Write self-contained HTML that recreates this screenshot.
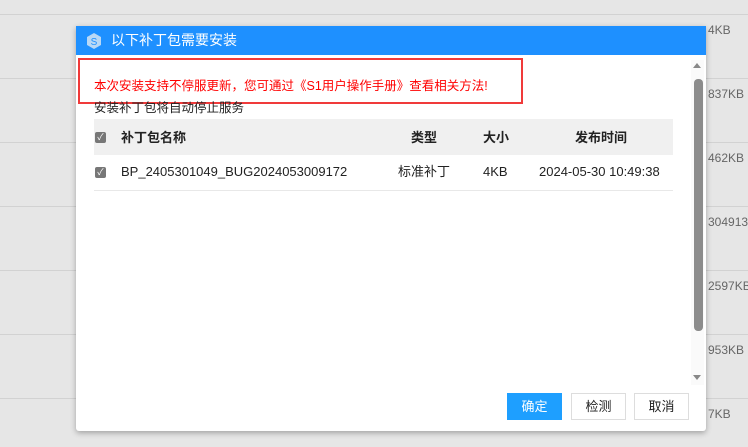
<!DOCTYPE html>
<html><head><meta charset="utf-8"><style>
*{margin:0;padding:0;box-sizing:border-box}
body{width:748px;height:447px;background:#e6e6e6;position:relative;overflow:hidden;font-family:"Liberation Sans","Noto Sans CJK SC",sans-serif;font-size:12px;color:#222}
.l{position:absolute;left:0;width:748px;height:1px;background:#d2d2d2}
.s{position:absolute;left:708px;color:#666;font-size:12px}
.dlg{position:absolute;left:76px;top:26px;width:630px;height:405px;background:#fff;box-shadow:0 2px 6px rgba(0,0,0,.3);border-radius:0 0 3px 3px}
.hd{height:29px;background:#1e90ff;color:#fff;font-size:14px;line-height:29px;padding-left:35px;position:relative}
.ab{position:absolute;line-height:16px}
.cb{position:absolute;width:11px;height:11px;background:#777;border-radius:2px;color:#fff;font-size:9px;line-height:11px;text-align:center}
.btn{position:absolute;top:367px;height:27px;width:55px;border:1px solid #ddd;text-align:center;line-height:25px;font-size:13px;background:#fff}
</style></head><body>
<div class="l" style="top:14px"></div><div class="l" style="top:78px"></div><div class="l" style="top:142px"></div><div class="l" style="top:206px"></div><div class="l" style="top:270px"></div><div class="l" style="top:334px"></div><div class="l" style="top:398px"></div>
<div class="s" style="top:23px">4KB</div><div class="s" style="top:87px">837KB</div><div class="s" style="top:151px">462KB</div><div class="s" style="top:215px">304913K</div><div class="s" style="top:279px">2597KB</div><div class="s" style="top:343px">953KB</div><div class="s" style="top:407px">7KB</div>
<div class="dlg">
<div class="hd"><svg style="position:absolute;left:11px;top:7px" width="14" height="16" viewBox="0 0 14 16"><path d="M7 0L14 4V12L7 16L0 12V4Z" fill="#b9d8f5"/><text x="7" y="12" font-size="10" text-anchor="middle" fill="#1e90ff" font-family="Liberation Sans">S</text></svg>以下补丁包需要安装</div>
<div class="ab" style="left:2px;top:32px;width:445px;height:46px;border:2px solid #f03a3a"></div>
<div class="ab" style="left:18px;top:52px;color:#f00;font-size:12.5px">本次安装支持不停服更新，您可通过《S1用户操作手册》查看相关方法!</div>
<div class="ab" style="left:18px;top:74px;font-size:12.5px">安装补丁包将自动停止服务</div>
<div class="ab" style="left:18px;top:93px;width:579px;height:36px;background:#f0f0f0"></div>
<div class="cb" style="left:19px;top:106px">✓</div>
<div class="ab" style="left:45px;top:104px;font-weight:bold;font-size:13px">补丁包名称</div>
<div class="ab" style="left:335px;top:104px;font-weight:bold;font-size:13px">类型</div>
<div class="ab" style="left:407px;top:104px;font-weight:bold;font-size:13px">大小</div>
<div class="ab" style="left:499px;top:104px;font-weight:bold;font-size:13px">发布时间</div>
<div class="cb" style="left:19px;top:141px">✓</div>
<div class="ab" style="left:45px;top:138px;font-size:13px">BP_2405301049_BUG2024053009172</div>
<div class="ab" style="left:322px;top:138px;font-size:13px">标准补丁</div>
<div class="ab" style="left:407px;top:138px;font-size:13px">4KB</div>
<div class="ab" style="left:463px;top:138px;font-size:13px">2024-05-30 10:49:38</div>
<div class="ab" style="left:18px;top:164px;width:579px;height:1px;background:#e8e8e8"></div>
<div class="ab" style="left:615px;top:34px;width:13px;height:325px;background:#fafafa"></div>
<div class="ab" style="left:617px;top:37px;width:0;height:0;border:4px solid transparent;border-bottom:5px solid #888;border-top:0"></div>
<div class="ab" style="left:617px;top:349px;width:0;height:0;border:4px solid transparent;border-top:5px solid #888;border-bottom:0"></div>
<div class="ab" style="left:618px;top:53px;width:9px;height:252px;background:#8c8c8c;border-radius:4px"></div>
<div class="btn" style="left:431px;background:#1e9fff;border-color:#1e9fff;color:#fff">确定</div>
<div class="btn" style="left:495px">检测</div>
<div class="btn" style="left:558px">取消</div>
</div>
</body></html>
